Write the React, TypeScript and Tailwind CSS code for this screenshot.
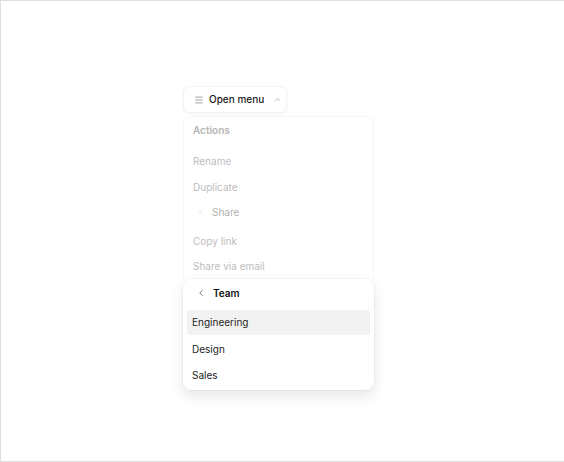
import { ChevronLeft, ChevronUp, Menu } from 'lucide-react'

const font = { fontFamily: 'Inter, "Noto Sans", sans-serif' }

export default function App() {
  return (
    <div
      className="h-[462px] w-[564px] overflow-hidden border-t border-b border-l border-[#dedede] bg-white"
      style={font}
    >
      <div className="flex flex-col pl-[182px] pt-[85px]">
        {/* trigger */}
        <button
          type="button"
          className="flex h-[27px] w-[104px] items-center gap-[5px] whitespace-nowrap rounded-md border border-[#f3f3f3] bg-white pl-[10px] text-[10px] font-medium text-[#1a1a1a] shadow-[0_1px_3px_rgba(0,0,0,0.05)]"
        >
          <Menu size={10} strokeWidth={1.6} className="text-[#777]" />
          <span>Open menu</span>
          <ChevronUp size={9} strokeWidth={1.8} className="ml-[4px] text-[#999]" />
        </button>

        {/* menu stack */}
        <div className="mt-[3px] flex w-[191px] flex-col">
          {/* faded parent levels */}
          <div className="flex flex-col rounded-t-lg border-x border-t border-[#f6f6f6] px-[9px] pt-[2px] text-[10px] text-[#bdbdbd]">
            <div className="flex h-[22px] items-center font-semibold text-[#b5b5b5]">Actions</div>
            <div className="mt-[7px] flex h-[26px] items-center">Rename</div>
            <div className="flex h-[26px] items-center">Duplicate</div>
            <div className="flex h-[24px] items-center gap-[7px] pl-[3px] text-[#b0b0b0]">
              <ChevronLeft size={9} strokeWidth={1.6} className="text-[#cfcfcf]" />
              <span>Share</span>
            </div>
            <div className="mt-[5px] flex h-[25px] items-center">Copy link</div>
            <div className="flex h-[25px] items-center">Share via email</div>
          </div>

          {/* active level */}
          <div className="flex flex-col rounded-lg bg-white px-[4px] pb-[2px] pt-[2px] shadow-[0_6px_14px_rgba(0,0,0,0.10),0_0_0_1px_rgba(0,0,0,0.03)]">
            <div className="flex h-[24px] items-center gap-[7px] pl-[9px] text-[10px] font-semibold text-[#111]">
              <ChevronLeft size={10} strokeWidth={2} className="text-[#555]" />
              <span>Team</span>
            </div>
            <div className="mt-[5px] flex h-[25px] items-center rounded-[3px] bg-[#f2f2f2] px-[5px] text-[10px] text-[#222]">
              Engineering
            </div>
            <div className="mt-[1px] flex h-[26px] items-center px-[5px] text-[10px] text-[#222]">Design</div>
            <div className="flex h-[26px] items-center px-[5px] text-[10px] text-[#222]">Sales</div>
          </div>
        </div>
      </div>
    </div>
  )
}
